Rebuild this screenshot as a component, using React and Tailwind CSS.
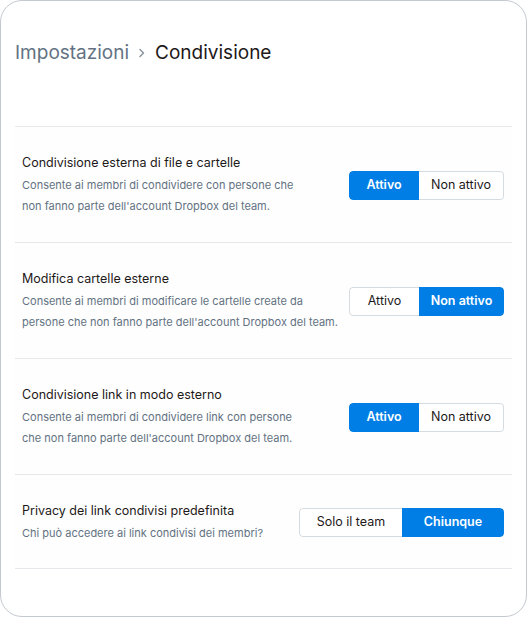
import { useState } from "react";

const rows = [
  {
    title: "Condivisione esterna di file e cartelle",
    desc: ["Consente ai membri di condividere con persone che", "non fanno parte dell'account Dropbox del team."],
    options: [["Attivo", "w-[70px]"], ["Non attivo", "w-[85px]"]],
    active: 0,
  },
  {
    title: "Modifica cartelle esterne",
    desc: ["Consente ai membri di modificare le cartelle create da", "persone che non fanno parte dell'account Dropbox del team."],
    options: [["Attivo", "w-[70px]"], ["Non attivo", "w-[85px]"]],
    active: 1,
  },
  {
    title: "Condivisione link in modo esterno",
    desc: ["Consente ai membri di condividere link con persone", "che non fanno parte dell'account Dropbox del team."],
    options: [["Attivo", "w-[70px]"], ["Non attivo", "w-[85px]"]],
    active: 0,
  },
  {
    title: "Privacy dei link condivisi predefinita",
    desc: ["Chi può accedere ai link condivisi dei membri?"],
    options: [["Solo il team", "w-[103px]"], ["Chiunque", "w-[102px]"]],
    active: 1,
  },
];

function Segmented({ options, initial }) {
  const [active, setActive] = useState(initial);
  return (
    <div className="flex h-[29px] shrink-0 rounded-[4px] overflow-hidden">
      {options.map(([label, w], i) => {
        const on = i === active;
        const first = i === 0;
        return (
          <button key={label} onClick={() => setActive(i)}
            className={`${w} h-full text-[12.5px] leading-none
              ${first ? "rounded-l-[4px]" : "rounded-r-[4px]"}
              ${on
                ? "bg-[#007ee5] text-white font-semibold"
                : `bg-white text-[#1e1919] border border-[#d6dbe0] ${first ? "border-r-0" : "border-l-0"}`}`}>
            {label}
          </button>
        );
      })}
    </div>
  );
}

export default function App() {
  return (
    <div className="w-[527px] h-[617px] bg-white font-['Inter',sans-serif]">
      <div className="h-full border border-[#c4c9d0] rounded-[22px] pl-[14px] pr-[14px]">
        <div className="h-[125px] pt-[40px] flex items-start gap-[7px] text-[19px] leading-[24px]">
          <span className="text-[#637282]">Impostazioni</span>
          <svg width="12" height="24" viewBox="0 0 12 24" className="text-[#8c95a0]">
            <path d="M4 8.5 L7.5 12 L4 15.5" fill="none" stroke="currentColor" strokeWidth="1.5" strokeLinecap="round" strokeLinejoin="round"/>
          </svg>
          <span className="text-[#1e1919]">Condivisione</span>
        </div>

        <div className="bg-[#fefefe] border-t border-[#e6e8eb]">
          {rows.map((r, idx) => (
            <div key={r.title}
              className={`flex items-center justify-between pl-[7px] pr-[8px] pt-[26px] border-b border-[#e6e8eb]
                ${idx === 3 ? "pb-[24px]" : "pb-[25px]"}`}>
              <div className="whitespace-nowrap">
                <p className="text-[12.5px] leading-[20px] text-[#1e1919]">{r.title}</p>
                <p className="mt-[2px] text-[11px] leading-[21px] text-[#637282]">
                  {r.desc.map((d, i) => (
                    <span key={i} className="block">{d}</span>
                  ))}
                </p>
              </div>
              <Segmented options={r.options} initial={r.active} />
            </div>
          ))}
        </div>
      </div>
    </div>
  );
}
